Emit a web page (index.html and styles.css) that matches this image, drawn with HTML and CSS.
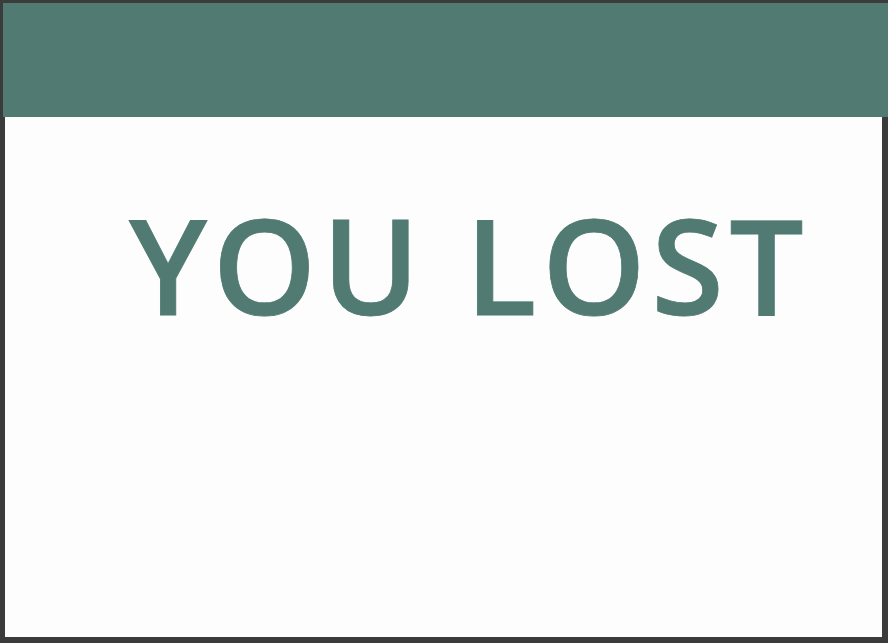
FILE: index.html
```html
<!DOCTYPE html>
<html>
<head>
<meta charset="utf-8">
<link rel="stylesheet" href="styles.css">
</head>
<body>
<div class="frame">
  <div class="header"></div>
  <div class="panel">
    <h1 class="title">YOU LOST</h1>
  </div>
</div>
</body>
</html>
```
FILE: styles.css
```css
html, body {
  margin: 0;
  padding: 0;
  height: 100%;
}
body {
  background: #3b3b3b;
  font-family: "Open Sans", sans-serif;
}
.frame {
  display: flex;
  flex-direction: column;
  height: 640px;
  margin: 3px 0 0 3px;
}
.header {
  height: 114px;
  background: #507a72;
  flex: none;
}
.panel {
  flex: 1;
  background: #fdfdfd;
  margin: 0 6px 6px 2px;
  padding-left: 124px;
}
.title {
  margin: 0;
  padding-top: 81px;
  font-size: 132px;
  font-weight: 600;
  line-height: 1;
  color: #507a72;
  letter-spacing: 5.4px;
  -webkit-text-stroke: 0.8px #507a72;
}
```
